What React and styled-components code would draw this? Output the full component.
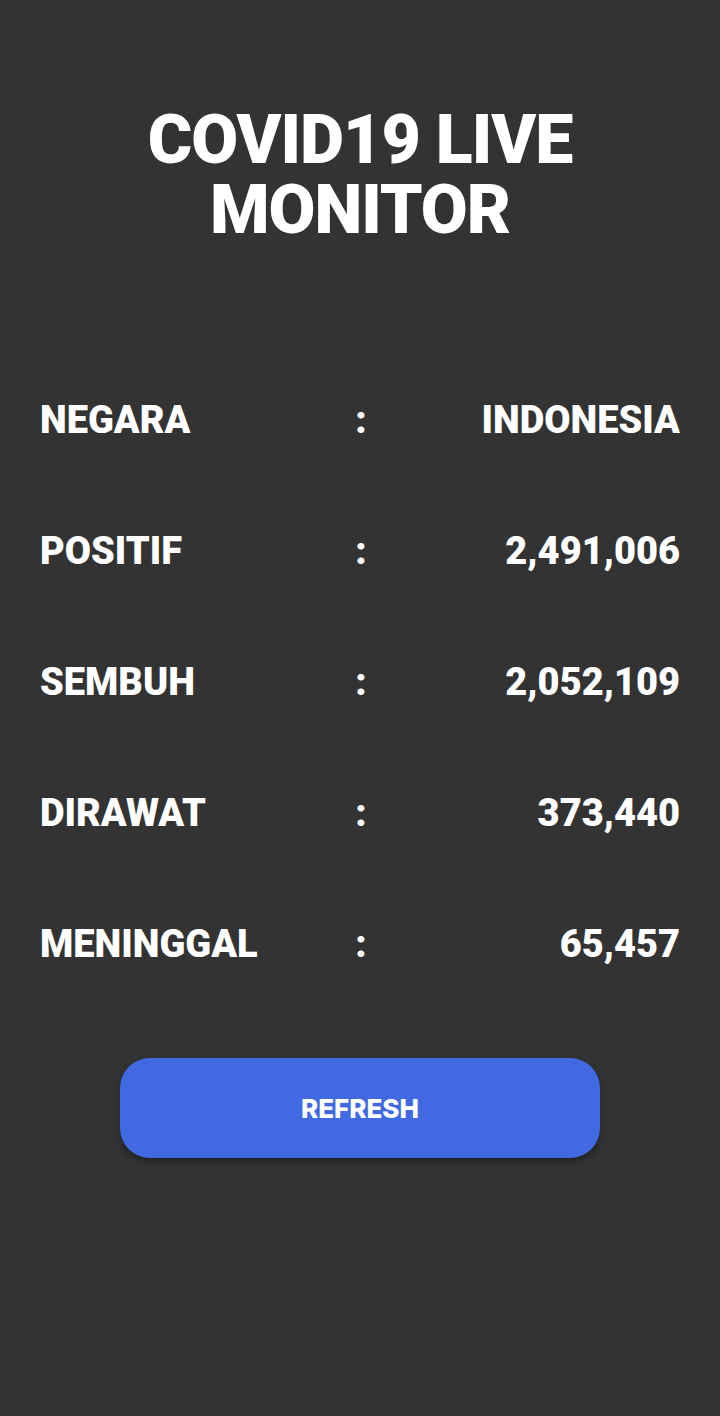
import React from "react";
import styled, { createGlobalStyle } from "styled-components";

const stats = [
	{ label: "NEGARA", value: "INDONESIA" },
	{ label: "POSITIF", value: "2,491,006" },
	{ label: "SEMBUH", value: "2,052,109" },
	{ label: "DIRAWAT", value: "373,440" },
	{ label: "MENINGGAL", value: "65,457" }
];

const App = () => {
	return (
		<>
			<GlobalStyle />
			<Screen>
				<Title>
					<TitleLine>COVID19 LIVE</TitleLine>
					<TitleLine>MONITOR</TitleLine>
				</Title>
				<StatList>
					{stats.map((s) => (
						<StatRow key={s.label}>
							<Label>{s.label}</Label>
							<Colon>:</Colon>
							<Value>{s.value}</Value>
						</StatRow>
					))}
				</StatList>
				<RefreshButton>REFRESH</RefreshButton>
			</Screen>
		</>
	);
};

export default App;

const GlobalStyle = createGlobalStyle`
	body {
		margin: 0;
		background-color: #333333;
	}
`;

const Screen = styled.div`
	width: 720px;
	height: 1416px;
	box-sizing: border-box;
	background-color: #333333;
	color: #ffffff;
	font-family: Roboto, "Liberation Sans", sans-serif;
	display: flex;
	flex-direction: column;
	align-items: center;
	padding-top: 105px;
`;

const Title = styled.h1`
	margin: 0;
	font-size: 68px;
	font-weight: 900;
	line-height: 70px;
	letter-spacing: -1px;
	text-align: center;
`;

const TitleLine = styled.span`
	display: block;
	height: 70px;
`;

const StatList = styled.div`
	width: 100%;
	box-sizing: border-box;
	padding: 0 40px;
	margin-top: 153px;
	display: flex;
	flex-direction: column;
	gap: 91px;
`;

const StatRow = styled.div`
	display: grid;
	grid-template-columns: 1fr auto 1fr;
	align-items: center;
	height: 40px;
	font-size: 38px;
	font-weight: 900;
`;

const Label = styled.span`
	text-align: left;
`;

const Colon = styled.span`
	text-align: center;
	padding-left: 2px;
`;

const Value = styled.span`
	text-align: right;
`;

const RefreshButton = styled.button`
	margin-top: 96px;
	width: 480px;
	height: 100px;
	border: none;
	border-radius: 30px;
	background-color: #4169e1;
	color: #ffffff;
	font-family: Inter, "Liberation Sans", sans-serif;
	font-weight: 800;
	font-size: 26px;
	box-shadow: 0 4px 6px rgba(0, 0, 0, 0.35);
	cursor: pointer;
`;
